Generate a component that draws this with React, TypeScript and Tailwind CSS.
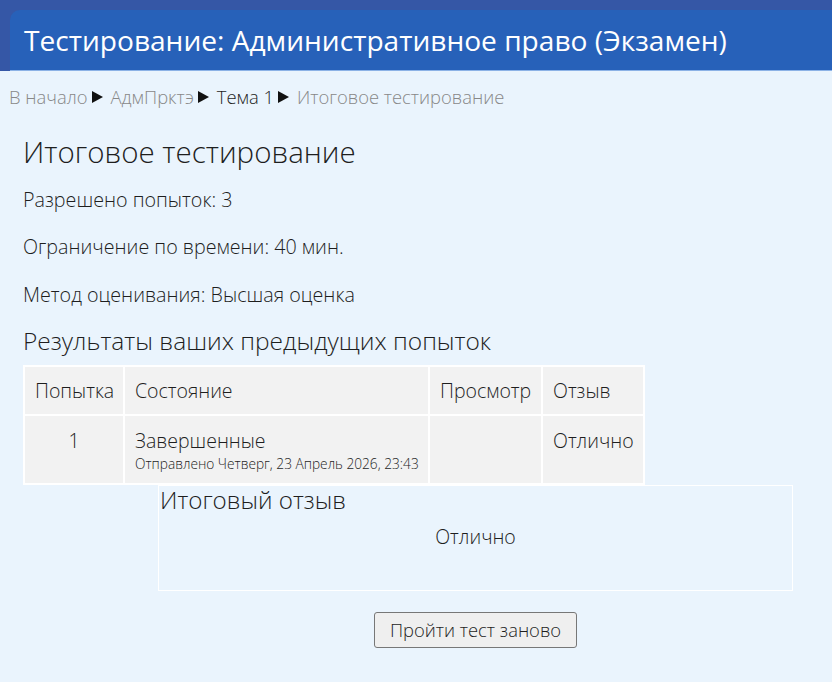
function Arrow() {
  return (
    <svg width="11" height="12" viewBox="0 0 11 12" className="ml-[4px] mr-[8px] inline-block">
      <polygon points="0,0 11,6 0,12" fill="#111" />
    </svg>
  );
}

export default function App() {
  const font = { fontFamily: '"Open Sans", "Noto Sans", sans-serif' };
  return (
    <div className="min-h-[682px] bg-[#eaf4fd] text-[#1e1e1e] font-light" style={font}>
      {/* Header */}
      <div className="bg-[#3557a6] pt-[10px] pl-[10px]">
        <div className="h-[61px] rounded-tl-[10px] bg-[#2761b9] border-b border-[#8cb2e6] pl-[14px] flex items-center">
          <h1 className="text-[28.1px] font-normal text-white leading-none">
            Тестирование: Административное право (Экзамен)
          </h1>
        </div>
      </div>

      {/* Breadcrumb */}
      <nav className="pl-[9px] pt-[14px] text-[18.4px] leading-[24px] flex items-center">
        <span className="text-[#888]">В начало</span>
        <Arrow />
        <span className="text-[#888]">АдмПрктэ</span>
        <Arrow />
        <span className="text-[#1e1e1e]">Тема 1</span>
        <Arrow />
        <span className="text-[#888]">Итоговое тестирование</span>
      </nav>

      <main className="pl-[23px] pr-[20px]">
        <h2 className="mt-[25px] text-[29.5px] leading-[36px]">Итоговое тестирование</h2>
        <p className="mt-[17px] text-[19.7px] leading-[26px]">Разрешено попыток: 3</p>
        <p className="mt-[21px] text-[19.7px] leading-[26px]">Ограничение по времени: 40 мин.</p>
        <p className="mt-[22px] text-[19.7px] leading-[26px]">Метод оценивания: Высшая оценка</p>
        <h3 className="mt-[18px] text-[24.5px] leading-[30px]">Результаты ваших предыдущих попыток</h3>

        <table className="mt-[9px] w-[620px] table-fixed border-collapse text-[19.5px]">
          <colgroup>
            <col className="w-[100px]" />
            <col className="w-[305px]" />
            <col className="w-[113px]" />
            <col className="w-[102px]" />
          </colgroup>
          <thead>
            <tr className="h-[49px] bg-[#f2f2f2]">
              <th className="border-2 border-white font-light text-left px-[10px] whitespace-nowrap">Попытка</th>
              <th className="border-2 border-white font-light text-left px-[10px]">Состояние</th>
              <th className="border-2 border-white font-light text-left pl-[10px] pr-0 whitespace-nowrap">Просмотр</th>
              <th className="border-2 border-white font-light text-left px-[10px]">Отзыв</th>
            </tr>
          </thead>
          <tbody>
            <tr className="h-[69px] bg-[#f2f2f2] align-top">
              <td className="border-2 border-white text-center pt-[12px] leading-[26px]">1</td>
              <td className="border-2 border-white px-[10px] pt-[12px]">
                <div className="leading-[26px]">Завершенные</div>
                <div className="text-[13.7px] leading-[20px] whitespace-nowrap">Отправлено Четверг, 23 Апрель 2026, 23:43</div>
              </td>
              <td className="border-2 border-white"></td>
              <td className="border-2 border-white px-[10px] pt-[12px] leading-[26px]">Отлично</td>
            </tr>
          </tbody>
        </table>

        <div className="ml-[135px] w-[635px]">
          <section className="h-[106px] border border-white">
            <h3 className="pl-[1px] text-[24.2px] leading-[28px]">Итоговый отзыв</h3>
            <p className="mt-[11px] text-center text-[19.5px] leading-[24px]">Отлично</p>
          </section>

          <div className="mt-[21px] flex justify-center">
            <button className="w-[203px] h-[36px] bg-[#efefef] border border-[#777] rounded-[3px] text-[18.4px] font-light text-[#1e1e1e]">
              Пройти тест заново
            </button>
          </div>
        </div>
      </main>
    </div>
  );
}
